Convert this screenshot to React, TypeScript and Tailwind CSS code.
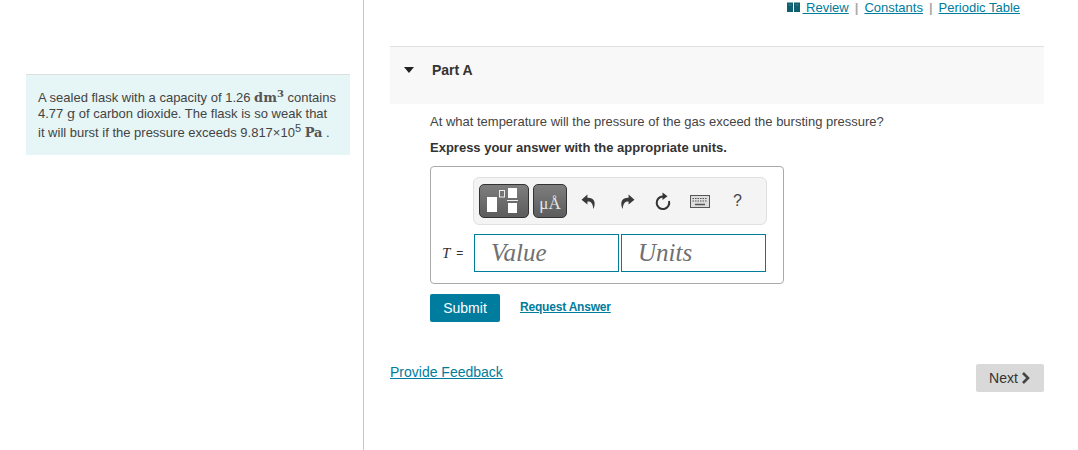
const UndoIcon = ({ flip }: { flip?: boolean }) => (
  <svg width="15" height="17" viewBox="0 0 14 15" className={flip ? '-scale-x-100' : ''}>
    <path d="M6 1 L0.5 5.8 L6 10.4 L6 7.5 C9 7.3 10.8 8.6 11.6 14.5 C13.6 10 13.8 3.9 6 3.9 Z" fill="#3a3a3a" />
  </svg>
)

const BookIcon = () => (
  <svg width="13" height="10" viewBox="0 0 13 10" className="mr-[3px] mt-[1px]">
    <path d="M0 0.5 H6 V10 H0 Z M7 0.5 H13 V10 H7 Z" fill="#0f5f70" />
    <path d="M1.5 3 H4.5 M8.5 3 H11.5" stroke="#3d8496" strokeWidth="1" />
  </svg>
)

const Toolbar = () => (
  <div className="flex h-[48px] w-[294px] items-center rounded-[6px] border border-[#e0e0e0] bg-[#f4f4f4] pl-[5px]">
    <button className="flex h-[34px] w-[50px] items-end rounded-[5px] border border-[#333] bg-gradient-to-b from-[#7e7e7e] to-[#5c5c5c]">
      <svg width="48" height="32" viewBox="0 0 48 32">
        <rect x="7" y="12" width="10" height="15" fill="#fff" />
        <rect x="19.5" y="5.5" width="5" height="6.5" fill="none" stroke="#eee" strokeWidth="1" />
        <rect x="28" y="3" width="9" height="10" fill="#fff" />
        <rect x="27" y="15" width="11" height="1" fill="#eee" />
        <rect x="28" y="18" width="9" height="10" fill="#fff" />
      </svg>
    </button>
    <button className="ml-[4px] flex h-[34px] w-[34px] items-end justify-center rounded-[5px] border border-[#333] bg-gradient-to-b from-[#7e7e7e] to-[#5c5c5c] pb-[3px] font-['Liberation_Serif',serif] text-[17px] leading-[20px] text-[#e6e6e6]">
      μÅ
    </button>
    <span className="ml-[14px] flex w-[15px]"><UndoIcon /></span>
    <span className="ml-[24px] flex w-[15px]"><UndoIcon flip /></span>
    <svg width="18" height="19" viewBox="0 0 18 19" className="ml-[19px]">
      <path d="M9 4.5 A6.3 6.3 0 1 0 15 9" fill="none" stroke="#333" strokeWidth="2" />
      <path d="M8.5 0.5 L13.5 4.3 L8.5 8 Z" fill="#333" />
    </svg>
    <svg width="20" height="13" viewBox="0 0 20 13" className="ml-[18px]">
      <rect x="0.5" y="0.5" width="19" height="12" fill="#ddd" stroke="#555" />
      <path d="M2.5 3.5 H17.5 M2.5 6 H17.5" stroke="#555" strokeWidth="1.2" strokeDasharray="1.5 1" />
      <path d="M5 9.5 H15" stroke="#555" strokeWidth="1.5" />
    </svg>
    <span className="ml-[23px] text-[16px] leading-none text-[#444]">?</span>
  </div>
)

const AnswerBox = () => (
  <div className="mt-[11px] flex h-[118px] w-[354px] flex-col rounded-[4px] border border-[#aaa] pl-[42px] pt-[10px]">
    <Toolbar />
    <div className="mt-[9px] flex">
      <span className="-ml-[31px] mr-[9px] flex w-[23px] items-center whitespace-nowrap text-[12px] text-[#333]">
        <i className="mr-[6px] font-['Liberation_Serif',serif] text-[15px]">T</i>=
      </span>
      <div className="flex h-[38px] w-[145px] items-center border border-[#007c9c] pl-[16px] font-['Liberation_Serif',serif] text-[25px] italic text-[#707070]">
        Value
      </div>
      <div className="ml-[2px] flex h-[38px] w-[145px] items-center border border-[#007c9c] pl-[16px] font-['Liberation_Serif',serif] text-[25px] italic text-[#707070]">
        Units
      </div>
    </div>
  </div>
)

export default function App() {
  return (
    <div className="flex h-[450px] w-[1078px] overflow-hidden bg-white font-['Liberation_Sans',Arial,sans-serif] text-[#333]">
      <div className="h-full w-[364px] shrink-0 border-r border-[#c9c9c9] pl-[26px] pt-[74px]">
        <div className="h-[81px] w-[324px] border-t border-[#dedede] bg-[#e6f5f5] pl-[12px] pt-[15px] text-[13px] leading-[16px] text-[#444]">
          <p className="h-[16px] whitespace-nowrap">
            A sealed flask with a capacity of 1.26{' '}
            <span className="font-['DejaVu_Serif',serif] text-[13px] font-bold text-[#555]">
              dm<sup className="text-[10px] leading-none">3</sup>
            </span>{' '}
            contains
          </p>
          <p className="h-[19px] whitespace-nowrap">
            4.77 <span className="font-['DejaVu_Serif',serif] text-[13px]">g</span> of carbon dioxide. The flask is so weak that
          </p>
          <p className="h-[17px] whitespace-nowrap">
            it will burst if the pressure exceeds 9.817×10<sup className="text-[11px] leading-none">5</sup>{' '}
            <span className="font-['DejaVu_Serif',serif] text-[13px] font-bold text-[#555]">Pa</span> .
          </p>
        </div>
      </div>

      <div className="flex w-[680px] flex-col pl-[26px]">
        <div className="flex h-[46px] w-[630px] items-start justify-end pt-[1px] text-[13px] leading-[14px] text-[#007c9c]">
          <BookIcon />
          <a className="underline">&nbsp;Review</a>
          <span className="mx-[6px] font-bold text-[#aaa]">|</span>
          <a className="underline">Constants</a>
          <span className="mx-[6px] font-bold text-[#aaa]">|</span>
          <a className="underline">Periodic Table</a>
        </div>

        <div className="flex h-[58px] w-[654px] items-start border-t border-[#e0e0e0] bg-[#f8f8f8] pt-[15px]">
          <svg width="10" height="6" viewBox="0 0 10 6" className="ml-[14px] mt-[5px]">
            <path d="M0 0 H10 L5 6 Z" fill="#222" />
          </svg>
          <span className="ml-[18px] text-[14px] font-bold leading-[16px]">Part A</span>
        </div>

        <div className="pl-[40px]">
          <p className="mt-[10px] text-[13px] leading-[15px] text-[#444]">
            At what temperature will the pressure of the gas exceed the bursting pressure?
          </p>
          <p className="mt-[11px] text-[13px] font-bold leading-[15px]">Express your answer with the appropriate units.</p>
          <AnswerBox />
          <div className="mt-[10px] flex items-start">
            <button className="h-[28px] w-[70px] rounded-[2px] bg-[#007c9f] text-[14px] text-white">Submit</button>
            <a className="ml-[20px] mt-[6px] text-[12px] font-bold leading-[14px] tracking-[-0.2px] text-[#007c9c] underline">Request Answer</a>
          </div>
        </div>

        <div className="mt-[42px] flex w-[654px] items-start justify-between">
          <a className="text-[14px] leading-[16px] text-[#007c9c] underline">Provide Feedback</a>
          <button className="flex h-[28px] w-[68px] items-center justify-center rounded-[2px] bg-[#d9d9d9] text-[14px] text-[#333]">
            Next
            <svg width="10" height="12" viewBox="0 0 10 12" className="ml-[3px]">
              <path d="M2 1 L7 6 L2 11" fill="none" stroke="#444" strokeWidth="2.6" />
            </svg>
          </button>
        </div>
      </div>
    </div>
  )
}
